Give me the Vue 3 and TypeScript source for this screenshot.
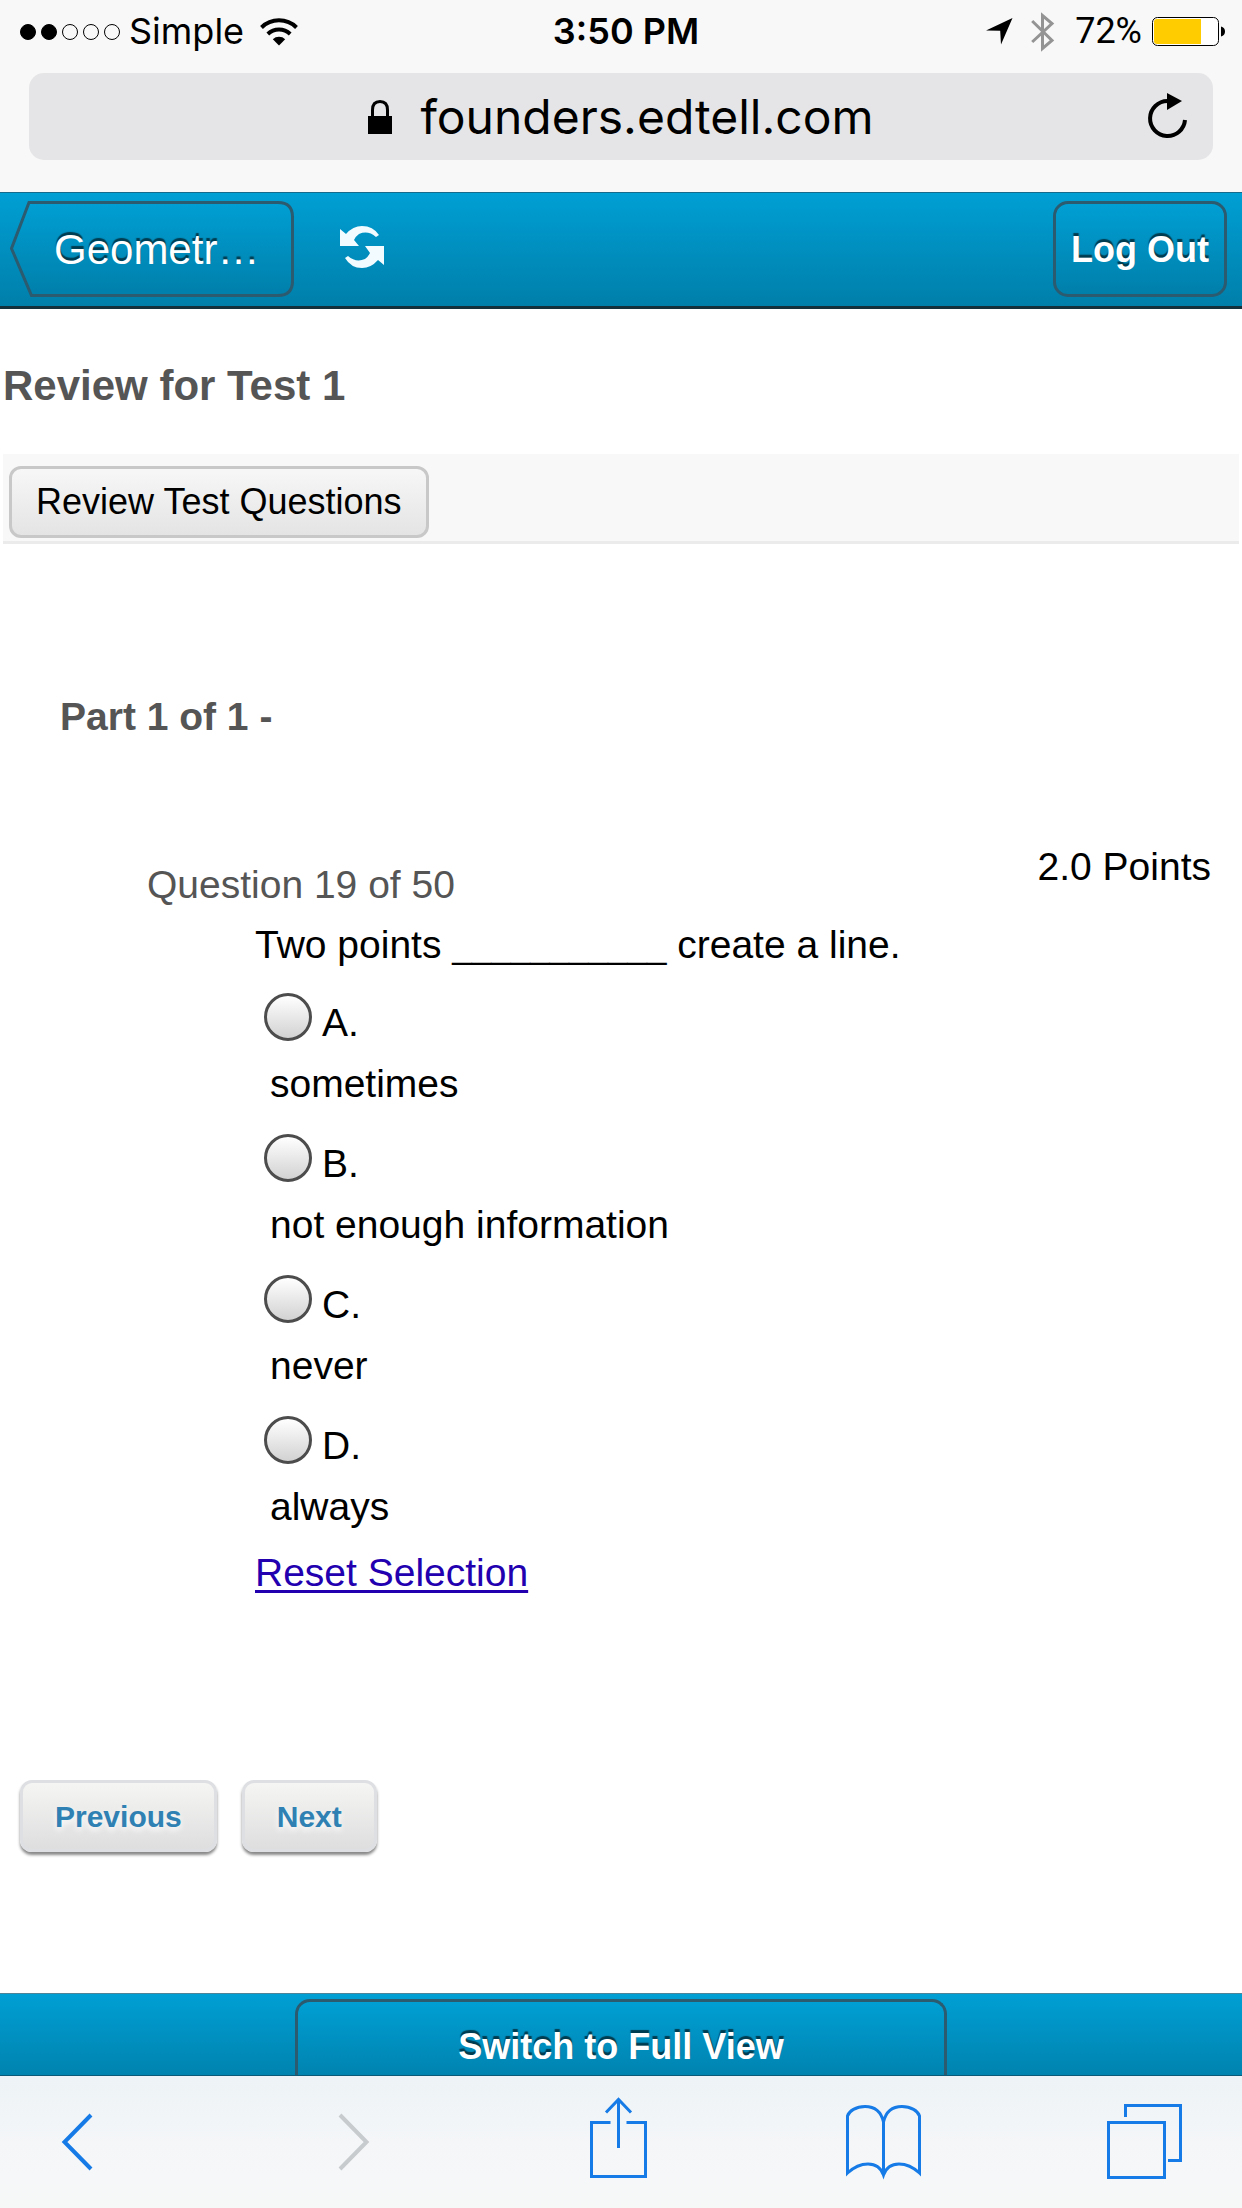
<script setup lang="ts">
import { ref } from 'vue'

interface Option {
  letter: string
  text: string
}

const options: Option[] = [
  { letter: 'A', text: 'sometimes' },
  { letter: 'B', text: 'not enough information' },
  { letter: 'C', text: 'never' },
  { letter: 'D', text: 'always' },
]

const signal = [true, true, false, false, false]
const selected = ref('')

function resetSelection(): void {
  selected.value = ''
}
</script>

<template>
  <div class="screen">
    <div class="chrome">
      <div class="status">
        <div class="status-left">
          <span class="dots">
            <i v-for="(on, i) in signal" :key="i" class="dot" :class="{ on }"></i>
          </span>
          <span>Simple</span>
          <svg class="wifi" width="38" height="28" viewBox="0 0 38 28" fill="none" stroke="#000" stroke-width="4">
            <path d="M1.500 9.500A25 25 0 0 1 36.500 9.500" />
            <path d="M7.800 16A16.500 16.500 0 0 1 30.200 16" />
            <path d="M12.800 21.200A9 9 0 0 1 25.200 21.200L19 27.500Z" fill="#000" stroke="none" />
          </svg>
        </div>
        <span class="time">3:50 PM</span>
        <div class="status-right">
          <svg width="27" height="27" viewBox="0 0 27 27"><path d="M0 12.500L26.500 0L15 26.500L14.200 12.800Z" /></svg>
          <svg class="bluetooth" width="24" height="42" viewBox="0 0 24 42" fill="none" stroke="#949494" stroke-width="3">
            <path d="M1.200 10L21 29.500L11.500 37.500V4.500L21 12.500L1.200 31" />
          </svg>
          <span class="percent">72%</span>
          <svg class="battery" width="74" height="29" viewBox="0 0 74 29">
            <rect x=".5" y=".5" width="66" height="28" rx="5" fill="#fff" stroke="#000" />
            <path d="M5 2H49V27H5Q2 27 2 24V5Q2 2 5 2Z" fill="#fc0" />
            <path d="M69 9.500Q73 10.500 73 14.500T69 19.500Z" />
          </svg>
        </div>
      </div>
      <div class="address">
        <div class="host">
          <svg width="24" height="34" viewBox="0 0 24 34">
            <rect y="16" width="24" height="18" />
            <path d="M4.500 17V10Q4.500 1.500 12 1.500T19.500 10V17" fill="none" stroke="#000" stroke-width="3" />
          </svg>
          <span>founders.edtell.com</span>
        </div>
        <button class="reload" type="button" aria-label="Reload">
          <svg width="40" height="46" viewBox="0 0 40 46">
            <path d="M37 27A17.500 17.500 0 1 1 19.500 8" fill="none" stroke="#000" stroke-width="4" />
            <path d="M19 0L34 8L19 17Z" />
          </svg>
        </button>
      </div>
    </div>

    <header class="topbar">
      <button class="back" type="button">
        <svg class="back-shape" width="283" height="96" viewBox="0 0 283 96">
          <defs>
            <linearGradient id="backFill" x1="0" y1="0" x2="0" y2="1">
              <stop offset="0" stop-color="#009fd4" />
              <stop offset="1" stop-color="#007faa" />
            </linearGradient>
          </defs>
          <path d="M18 1.500H267Q281.500 1.500 281.500 16V80Q281.500 94.500 267 94.500H20.500L.5 47.500Z" fill="url(#backFill)" stroke="#2c5a6e" stroke-width="3" />
        </svg>
        <span class="back-text">Geometr…</span>
      </button>
      <button class="refresh" type="button" aria-label="Refresh">
        <svg width="46" height="42" viewBox="0 0 46 42" fill="#f2fbff">
          <path d="M1 3L7 8Q14 0 23 0Q34 0 40 9L37 11Q29 4 20 8Q17 10 15 14L20 20H1Z" />
          <path d="M45 39L39 34Q32 42 23 42Q12 42 6 32L9 30Q17 37 26 33Q29 31 31 27L26 20H45Z" />
        </svg>
      </button>
      <button class="logout" type="button">Log Out</button>
    </header>

    <main class="content">
      <h1 class="title">Review for Test 1</h1>
      <div class="tools">
        <button class="review" type="button">Review Test Questions</button>
      </div>

      <h2 class="part">Part 1 of 1 -</h2>

      <section class="question">
        <div class="question-head">
          <h3 class="count">Question 19 of 50</h3>
          <span class="points">2.0 Points</span>
        </div>
        <div class="question-body">
          <p class="prompt">Two points <span class="blank">___________</span> create a line.</p>
          <div class="options" role="radiogroup" aria-label="Answer">
            <label v-for="option in options" :key="option.letter" class="option">
              <span class="choice">
                <input v-model="selected" type="radio" name="answer" :value="option.letter" />
                <span class="letter">{{ option.letter }}.</span>
              </span>
              <span class="answer">{{ option.text }}</span>
            </label>
          </div>
          <a class="reset" href="#" @click.prevent="resetSelection">Reset Selection</a>
        </div>
      </section>

      <nav class="pager">
        <button type="button">Previous</button>
        <button type="button">Next</button>
      </nav>
    </main>

    <footer class="bottom">
      <button class="switch" type="button">Switch to Full View</button>
    </footer>

    <nav class="safari">
      <button type="button" aria-label="Back">
        <svg class="chevron" width="75" height="84" viewBox="0 0 75 84"><path d="M29 13L2.500 40L29 67" /></svg>
      </button>
      <button type="button" aria-label="Forward" disabled>
        <svg class="chevron" width="75" height="84" viewBox="0 0 75 84"><path d="M17 13L43.500 40L17 67" /></svg>
      </button>
      <button type="button" aria-label="Share">
        <svg width="75" height="84" viewBox="0 0 75 84">
          <path d="M25.500 20.500H6.500V74.500H60.500V20.500H41.500M33.500 46V-2M21 10.500L33.500 -2.500L46 10.500" />
        </svg>
      </button>
      <button type="button" aria-label="Bookmarks">
        <svg width="75" height="84" viewBox="0 0 75 84">
          <path d="M37.500 73V20C35 9 28 4.500 19 4.500C10 4.500 3 9 1.500 14V71C8 65 15 62 22 62C30 62 35 66 37.500 73C40 66 45 62 53 62C60 62 67 65 73.500 71V14C72 9 65 4.500 56 4.500C47 4.500 40 9 37.500 20" />
        </svg>
      </button>
      <button type="button" aria-label="Tabs">
        <svg width="75" height="84" viewBox="0 0 75 84">
          <path d="M1.500 20.500H57.500V75.500H1.500ZM18.500 15V3.500H73.500V58.500H61" />
        </svg>
      </button>
    </nav>
  </div>
</template>

<style>
body {
  background: #fff;
}
</style>

<style scoped>
.screen {
  display: flex;
  flex-direction: column;
  min-height: 100vh;
  overflow: hidden;
  color: #000;
  font-family: "Liberation Sans", Arial, sans-serif;
  font-size: 39px;
  line-height: 45px;
}

svg {
  display: block;
  flex: none;
  overflow: visible;
}

button {
  box-sizing: border-box;
  margin: 0;
  padding: 0;
  border: 0;
  background: none;
  color: inherit;
  font: inherit;
}

h1,
h2,
h3,
p {
  margin: 0;
}

.chrome {
  padding-bottom: 32px;
  background: #f8f8f8;
  font-family: Inter, Roboto, sans-serif;
}

.status {
  display: grid;
  grid-template-columns: 1fr auto 1fr;
  align-items: center;
  height: 63px;
  padding: 0 16px 0 20px;
  font-size: 36px;
}

.status-left,
.status-right,
.dots {
  display: flex;
  align-items: center;
}

.status-right {
  justify-content: flex-end;
}

.dots {
  gap: 5px;
  margin-right: 9px;
}

.dot {
  box-sizing: border-box;
  width: 16px;
  height: 16px;
  border: 1px solid #000;
  border-radius: 50%;
}

.dot.on {
  background: #000;
}

.wifi {
  margin-left: 16px;
}

.time {
  padding-left: 6px;
  font-weight: 600;
}

.bluetooth {
  margin: 0 20px 0 18px;
}

.percent {
  font-family: Roboto, sans-serif;
}

.battery {
  margin-left: 10px;
}

.address {
  position: relative;
  display: flex;
  align-items: center;
  justify-content: center;
  height: 87px;
  margin: 10px 29px 0;
  border-radius: 15px;
  background: #e5e5e7;
  font-size: 48px;
}

.host {
  display: flex;
  align-items: center;
  gap: 28px;
}

.reload {
  position: absolute;
  top: 20px;
  right: 25px;
}

.topbar {
  display: flex;
  align-items: flex-start;
  box-sizing: border-box;
  height: 117px;
  padding: 8px 15px 0 11px;
  border-top: 1px solid #166a8c;
  border-bottom: 3px solid #14303c;
  background: linear-gradient(#009fd4, #007faa);
  color: #fff;
  text-shadow: 0 -3px 1px #003c50;
}

.back {
  position: relative;
  width: 283px;
  height: 96px;
  padding: 0 36px 0 43px;
  font-size: 42px;
  text-align: left;
  text-shadow: inherit;
}

.back-shape {
  position: absolute;
  inset: 0;
}

.back-text {
  position: relative;
}

.refresh {
  margin: 25px 0 0 45px;
}

.logout {
  height: 96px;
  margin-left: auto;
  padding: 0 15px;
  border: 3px solid #2c5a6e;
  border-radius: 15px;
  background: linear-gradient(#009fd4, #007faa);
  font-size: 36px;
  font-weight: bold;
  text-shadow: inherit;
}

.content {
  flex: 1;
  padding: 53px 3px 141px;
}

.title {
  color: #555;
  font-size: 42px;
  line-height: 48px;
}

.tools {
  margin-top: 44px;
  padding: 12px 6px 3px;
  border-bottom: 3px solid #ebebeb;
  background: #f8f8f8;
}

.review {
  display: block;
  height: 72px;
  padding: 0 24px 2px;
  border: 3px solid #c8c8c8;
  border-radius: 12px;
  background: linear-gradient(#f7f7f7, #e4e4e4);
  font-size: 36px;
}

.part {
  margin: 150px 0 0 57px;
  color: #555;
  font-size: 39px;
}

.question {
  margin: 105px 28px 0 144px;
}

.question-head {
  display: flex;
  align-items: flex-start;
  justify-content: space-between;
}

.count {
  margin-top: 18px;
  color: #555;
  font-size: 39px;
  font-weight: normal;
}

.question-body {
  margin: 15px 0 0 108px;
}

.blank {
  font-size: 35px;
}

.options {
  display: flex;
  flex-direction: column;
  gap: 28px;
  margin: 25px 0 21px 9px;
}

.option {
  display: flex;
  flex-direction: column;
  gap: 16px;
}

.choice {
  display: flex;
  align-items: flex-end;
  gap: 10px;
  height: 52px;
}

.choice input {
  align-self: flex-start;
  box-sizing: border-box;
  width: 48px;
  height: 48px;
  margin: 0;
  border: 3px solid #4c4c4c;
  border-radius: 50%;
  appearance: none;
  background: linear-gradient(#fff, #d2d2d2);
}

.choice input:checked {
  background: radial-gradient(#333 35%, #e4e4e4 38%);
}

.answer {
  padding-left: 6px;
}

.reset {
  color: #2200b0;
  text-decoration-thickness: 3px;
  text-underline-offset: 4px;
  text-decoration-skip-ink: none;
}

.pager {
  display: flex;
  gap: 25px;
  margin: 185px 0 0 17px;
}

.pager button {
  height: 72px;
  padding: 0 32px;
  border: 3px solid #dddfe2;
  border-radius: 12px;
  background: linear-gradient(#f5f5f3, #dededf);
  box-shadow: 0 3px 3px #888;
  color: #2f81b3;
  font-size: 30px;
  font-weight: bold;
  text-shadow: 0 3px 6px #fff;
}

.bottom {
  display: flex;
  justify-content: center;
  padding-top: 5px;
  border-top: 1px solid #4d8499;
  border-bottom: 1px solid #0b5a78;
  background: linear-gradient(#009fd4, #0083af);
  color: #fff;
}

.switch {
  width: 652px;
  max-width: 100%;
  height: 76px;
  padding-top: 15px;
  border: 3px solid #2c5a6e;
  border-bottom: 0;
  border-radius: 15px 15px 0 0;
  background: linear-gradient(#009fd4, #0083af);
  font-size: 36px;
  font-weight: bold;
  text-shadow: 0 -3px 1px #003c50;
}

.safari {
  display: flex;
  justify-content: space-between;
  padding: 26px 60px 22px 62px;
  background: linear-gradient(#edf3f6, #f4f6f8 50%, #f6f8f8);
  color: #167be6;
}

.safari svg {
  fill: none;
  stroke: currentColor;
  stroke-width: 3;
}

.safari .chevron {
  stroke-width: 4;
}

.safari button:disabled {
  color: #c8cbcd;
}
</style>
